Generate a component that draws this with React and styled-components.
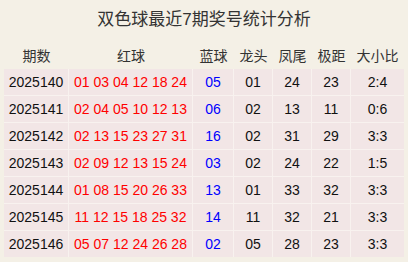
import styled, { createGlobalStyle } from "styled-components";

const GlobalStyle = createGlobalStyle`
  html, body {
    margin: 0;
    padding: 0;
    background: #f4f0e6;
  }
  body {
    font-family: "Liberation Sans", "Noto Sans CJK SC", sans-serif;
  }
`;

const Page = styled.div`
  width: 408px;
  height: 262px;
  background: #f4f0e6;
  display: flex;
  flex-direction: column;
  align-items: center;
`;

const Title = styled.div`
  height: 40px;
  line-height: 40px;
  font-size: 17px;
  color: #333;
  text-align: center;
`;

const Table = styled.table`
  width: 400px;
  border-collapse: separate;
  border-spacing: 0;
  table-layout: fixed;
`;

const Th = styled.th`
  height: 29px;
  padding: 0;
  font-size: 14px;
  font-weight: normal;
  color: #333;
  text-align: center;
  vertical-align: middle;
`;

const Td = styled.td`
  height: 26px;
  padding: 0;
  font-size: 14px;
  text-align: center;
  vertical-align: middle;
  background: #f2e6e6;
  color: ${p => p.tone || "#111"};
  border-right: 1px solid #f8f2ef;
  border-bottom: 1px solid #f8f2ef;
  &:last-child {
    border-right: none;
  }
  tr:last-child > & {
    border-bottom: none;
  }
`;

const cols = [65, 124, 41, 39, 39, 39, 53];
const heads = ["期数", "红球", "蓝球", "龙头", "凤尾", "极距", "大小比"];

const rows = [
  ["2025140", "01 03 04 12 18 24", "05", "01", "24", "23", "2:4"],
  ["2025141", "02 04 05 10 12 13", "06", "02", "13", "11", "0:6"],
  ["2025142", "02 13 15 23 27 31", "16", "02", "31", "29", "3:3"],
  ["2025143", "02 09 12 13 15 24", "03", "02", "24", "22", "1:5"],
  ["2025144", "01 08 15 20 26 33", "13", "01", "33", "32", "3:3"],
  ["2025145", "11 12 15 18 25 32", "14", "11", "32", "21", "3:3"],
  ["2025146", "05 07 12 24 26 28", "02", "05", "28", "23", "3:3"],
];

export default function App() {
  return (
    <Page>
      <GlobalStyle />
      <Title>双色球最近7期奖号统计分析</Title>
      <Table>
        <colgroup>
          {cols.map((w, i) => (
            <col key={i} style={{ width: w }} />
          ))}
        </colgroup>
        <thead>
          <tr>
            {heads.map(h => (
              <Th key={h}>{h}</Th>
            ))}
          </tr>
        </thead>
        <tbody>
          {rows.map(r => (
            <tr key={r[0]}>
              <Td>{r[0]}</Td>
              <Td tone="#ff0000">{r[1]}</Td>
              <Td tone="#0000ff">{r[2]}</Td>
              <Td>{r[3]}</Td>
              <Td>{r[4]}</Td>
              <Td>{r[5]}</Td>
              <Td>{r[6]}</Td>
            </tr>
          ))}
        </tbody>
      </Table>
    </Page>
  );
}
